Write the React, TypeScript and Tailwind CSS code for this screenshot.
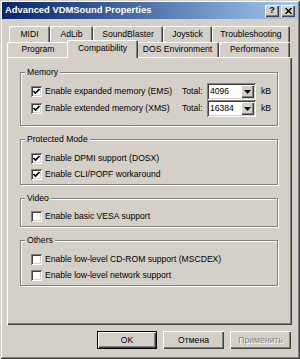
import React from "react";

// 3D borders in classic Windows style
const raised =
  "shadow-[inset_1px_1px_0_#ffffff,inset_-1px_-1px_0_#404040,inset_-2px_-2px_0_#808080]";
const sunken =
  "shadow-[inset_1px_1px_0_#808080,inset_-1px_-1px_0_#ffffff,inset_2px_2px_0_#404040,inset_-2px_-2px_0_#d4d0c8]";
const tabBorder =
  "shadow-[inset_1px_1px_0_#ffffff,inset_-1px_0_0_#404040,inset_-2px_0_0_#808080]";

function Check({ on }: { on?: boolean }) {
  return (
    <div className={`w-[11px] h-[11px] bg-white flex items-center justify-center shrink-0 ${sunken}`}>
      {on && (
        <svg width="7" height="7" viewBox="0 0 7 7">
          <path d="M0.5 3 L2.5 5 L6.5 1" stroke="#000" strokeWidth="1.6" fill="none" />
        </svg>
      )}
    </div>
  );
}

function Row({ on, label }: { on?: boolean; label: string }) {
  return (
    <div className="h-[16px] flex items-center gap-[3px] pl-[10px]">
      <Check on={on} />
      <span>{label}</span>
    </div>
  );
}

function Combo({ value }: { value: string }) {
  return (
    <div className={`w-[49px] h-[17px] bg-white flex items-center pl-[3px] pr-[2px] ${sunken}`}>
      <span className="flex-1">{value}</span>
      <div className={`w-[13px] h-[13px] bg-[#d4d0c8] flex items-center justify-center ${raised}`}>
        <svg width="7" height="4" viewBox="0 0 7 4">
          <path d="M0 0 H7 L3.5 4 Z" fill="#000" />
        </svg>
      </div>
    </div>
  );
}

function Group({ title, className, children }: { title: string; className: string; children: React.ReactNode }) {
  return (
    <div
      className={`relative border border-[#808080] shadow-[1px_1px_0_#ffffff,inset_1px_1px_0_#ffffff] ${className}`}
    >
      <span className="absolute -top-[7px] left-[4px] px-[2px] bg-[#d4d0c8] leading-[12px]">{title}</span>
      {children}
    </div>
  );
}

function Tab({ w, label }: { w: string; label: string }) {
  return (
    <div className={`${w} h-full flex items-center justify-center rounded-t-[2px] ${tabBorder}`}>
      {label}
    </div>
  );
}

export default function App() {
  return (
    <div
      className="w-[300px] h-[359px] bg-[#d4d0c8] p-[2px] flex flex-col whitespace-nowrap text-black text-[8.6px] font-['Liberation_Sans',Arial,sans-serif] shadow-[inset_1px_1px_0_#d4d0c8,inset_-1px_-1px_0_#404040,inset_2px_2px_0_#ffffff,inset_-2px_-2px_0_#808080]"
    >
      {/* Title bar */}
      <div className="h-[17px] flex items-center pl-[3px] pr-[3px] bg-gradient-to-r from-[#0a246a] to-[#a6caf0]">
        <span className="text-white font-bold text-[9.4px]">Advanced VDMSound Properties</span>
        <div className="ml-auto flex gap-[2px]">
          <div className={`w-[14px] h-[12px] bg-[#d4d0c8] flex items-center justify-center font-bold text-[9px] leading-none ${raised}`}>
            ?
          </div>
          <div className={`w-[14px] h-[12px] bg-[#d4d0c8] flex items-center justify-center ${raised}`}>
            <svg width="7" height="6" viewBox="0 0 7 6">
              <path d="M0.5 0 L6.5 6 M6.5 0 L0.5 6" stroke="#000" strokeWidth="1.4" />
            </svg>
          </div>
        </div>
      </div>

      <div className="pl-[5px] pr-[6px] pt-[7px]">
        {/* Tabs back row */}
        <div className="h-[16px] flex ml-[2px] mr-[2px]">
          <Tab w="w-[41px]" label="MIDI" />
          <Tab w="w-[43px]" label="AdLib" />
          <Tab w="w-[70px]" label="SoundBlaster" />
          <Tab w="w-[49px]" label="Joystick" />
          <Tab w="w-[78px]" label="Troubleshooting" />
        </div>
        {/* Tabs front row */}
        <div className="h-[15px] flex items-end mr-[2px]">
          <Tab w="w-[62px]" label="Program" />
          <div
            className={`relative z-10 w-[71px] h-[18px] -mx-[2px] -mb-[1px] pb-[2px] bg-[#d4d0c8] flex items-center justify-center rounded-t-[2px] ${tabBorder}`}
          >
            Compatibility
          </div>
          <Tab w="w-[83px]" label="DOS Environment" />
          <Tab w="w-[71px]" label="Performance" />
        </div>

        {/* Panel */}
        <div className={`h-[268px] pl-[13px] pr-[14px] pt-[15px] flex flex-col ${raised}`}>
          <Group title="Memory" className="h-[54px] pt-[10px]">
            <div className="h-[17px] flex items-center">
              <div className="w-[161px] shrink-0 flex items-center gap-[3px] pl-[10px]">
                <Check on />
                <span>Enable expanded memory (EMS)</span>
              </div>
              <span className="w-[25px] shrink-0">Total:</span>
              <Combo value="4096" />
              <span className="ml-[5px]">kB</span>
            </div>
            <div className="h-[17px] flex items-center">
              <div className="w-[161px] shrink-0 flex items-center gap-[3px] pl-[10px]">
                <Check on />
                <span>Enable extended memory (XMS)</span>
              </div>
              <span className="w-[25px] shrink-0">Total:</span>
              <Combo value="16384" />
              <span className="ml-[5px]">kB</span>
            </div>
          </Group>

          <Group title="Protected Mode" className="mt-[13px] h-[46px] pt-[10px]">
            <Row on label="Enable DPMI support (DOSX)" />
            <Row on label="Enable CLI/POPF workaround" />
          </Group>

          <Group title="Video" className="mt-[13px] h-[29px] pt-[9px]">
            <Row label="Enable basic VESA support" />
          </Group>

          <Group title="Others" className="mt-[13px] h-[46px] pt-[10px]">
            <Row label="Enable low-level CD-ROM support (MSCDEX)" />
            <Row label="Enable low-level network support" />
          </Group>
        </div>
      </div>

      {/* Buttons */}
      <div className="mt-[6px] pr-[7px] flex justify-end gap-[6px]">
        <div className="w-[60px] h-[18px] border border-black">
          <div className={`w-full h-full flex items-center justify-center ${raised}`}>OK</div>
        </div>
        <div className={`w-[61px] h-[18px] flex items-center justify-center ${raised}`}>Отмена</div>
        <div
          className={`w-[61px] h-[18px] flex items-center justify-center text-[#808080] [text-shadow:1px_1px_0_#ffffff] ${raised}`}
        >
          Применить
        </div>
      </div>
    </div>
  );
}
